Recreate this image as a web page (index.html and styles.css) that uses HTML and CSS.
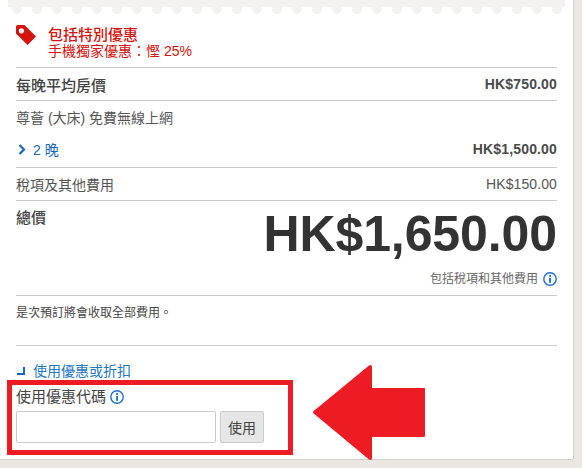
FILE: index.html
```html
<!DOCTYPE html>
<html lang="zh-Hant">
<head>
<meta charset="utf-8">
<title>價格摘要</title>
<link rel="stylesheet" href="styles.css">
</head>
<body>
<main class="card">
  <div class="scallop"></div>
  <section class="promo">
    <svg class="tag" viewBox="0 0 20 20" width="20" height="20" aria-hidden="true">
      <path d="M2 0H8.5L20 11.5L11.5 20L0 8.5V2Q0 0 2 0Z" fill="#d6120f"/>
      <circle cx="5.4" cy="5.8" r="2.6" fill="#fff"/>
    </svg>
    <div>
      <div class="promo-title">包括特別優惠</div>
      <div class="promo-sub">手機獨家優惠：慳 25%</div>
    </div>
  </section>
  <div class="row row-avg"><span class="strong">每晚平均房價</span><span class="money">HK$750.00</span></div>
  <div class="room-block">
    <div class="room">尊薈 (大床) 免費無線上網</div>
    <div class="nights">
      <span class="nights-label">
        <svg viewBox="0 0 8 11" width="8" height="11" aria-hidden="true"><path d="M1.5 1L6 5.5L1.5 10" fill="none" stroke="#1668c4" stroke-width="2.2"/></svg>
        2 晚
      </span>
      <span class="money">HK$1,500.00</span>
    </div>
  </div>
  <div class="row row-tax"><span>稅項及其他費用</span><span class="tax-val">HK$150.00</span></div>
  <section class="total">
    <div class="total-top"><span class="strong">總價</span><span class="grand">HK$1,650.00</span></div>
    <div class="total-note">包括稅項和其他費用
      <svg class="info" viewBox="0 0 14 14" width="14" height="14" aria-hidden="true"><circle cx="7" cy="7" r="6.2" fill="none" stroke="#1f6fd0" stroke-width="1.4"/><rect x="6.1" y="6" width="1.9" height="4.8" fill="#1f6fd0"/><rect x="6.1" y="3.1" width="1.9" height="1.8" fill="#1f6fd0"/></svg>
    </div>
  </section>
  <div class="notice">是次預訂將會收取全部費用。</div>
  <a class="coupon-link" href="#">
    <svg viewBox="0 0 8 8" width="8" height="8" aria-hidden="true"><path d="M7 0V7H0" fill="none" stroke="#1668c4" stroke-width="2"/></svg>
    使用優惠或折扣
  </a>
  <form class="coupon">
    <label class="coupon-label" for="code">使用優惠代碼
      <svg class="info" viewBox="0 0 14 14" width="14" height="14" aria-hidden="true"><circle cx="7" cy="7" r="6.2" fill="none" stroke="#1f6fd0" stroke-width="1.4"/><rect x="6.1" y="6" width="1.9" height="4.8" fill="#1f6fd0"/><rect x="6.1" y="3.1" width="1.9" height="1.8" fill="#1f6fd0"/></svg>
    </label>
    <div class="coupon-fields">
      <input id="code" class="coupon-input" type="text">
      <button class="coupon-btn" type="button">使用</button>
    </div>
  </form>
  <div class="highlight"></div>
  <svg class="arrow" viewBox="0 0 112 95" width="112" height="95" aria-hidden="true">
    <path d="M0.4 46.2L56 0.4Q59 -0.8 59 2V23H111Q112 23 112 24V71Q112 72 111 72H59V93Q59 95.8 56 94.6L0.4 48.2Q-0.4 47.2 0.4 46.2Z" fill="#ed1c24"/>
  </svg>
</main>
</body>
</html>
```
FILE: styles.css
```css
* { box-sizing: border-box; }
html, body { margin: 0; padding: 0; }
body {
  width: 582px;
  height: 468px;
  overflow: hidden;
  background: #ebe8e2;
  font-family: "Liberation Sans", "Noto Sans CJK TC", sans-serif;
  color: #444;
}
.card {
  position: relative;
  width: 574px;
  height: 460px;
  padding: 0 16px 0 16px;
  background: #fff;
  border-right: 1px solid #d2d0cb;
  border-bottom: 1px solid #d2d0cb;
  border-bottom-right-radius: 3px;
}
.card > * { width: 541px; }
.scallop {
  position: absolute;
  top: 0;
  left: 8px;
  width: 557px !important;
  height: 14px;
  background:
    linear-gradient(#f4f2ee, #f4f2ee) 0 0 / 100% 7px no-repeat,
    radial-gradient(circle at 9px 9px, #f4f2ee 4.6px, transparent 5.2px) 0 0 / 20px 14px repeat-x;
}
.promo {
  display: flex;
  height: 68px;
  padding-top: 25px;
  gap: 12px;
  border-bottom: 1px solid #ccc;
}
.tag { flex: none; }
.promo-title {
  margin-top: 2px;
  font-size: 15px;
  line-height: 16px;
  font-weight: 500;
  color: #d6120f;
}
.promo-sub {
  font-size: 14px;
  line-height: 16px;
  color: #d6120f;
}
.row {
  display: flex;
  justify-content: space-between;
  align-items: center;
  border-bottom: 1px solid #ccc;
}
.row-avg { height: 33px; }
.row-tax { height: 33px; font-size: 14px; color: #555; }
.strong { font-size: 15px; font-weight: 500; color: #444; }
.money { font-size: 14px; font-weight: 700; color: #4a4a4a; letter-spacing: .15px; }
.tax-val { font-size: 14px; color: #555; letter-spacing: .1px; }
.room-block {
  height: 67px;
  border-bottom: 1px solid #ccc;
  padding-top: 8px;
}
.room { font-size: 14px; line-height: 18px; color: #555; }
.nights {
  display: flex;
  justify-content: space-between;
  align-items: center;
  margin-top: 13px;
  height: 18px;
}
.nights-label {
  display: flex;
  align-items: center;
  gap: 7px;
  padding-left: 2px;
  font-size: 14px;
  color: #1668c4;
}
.total {
  height: 95px;
  border-bottom: 1px solid #ccc;
}
.total-top {
  display: flex;
  justify-content: space-between;
  align-items: flex-start;
  height: 62px;
}
.total-top .strong { margin-top: 8px; line-height: 18px; }
.grand {
  margin-top: 4px;
  font-size: 50px;
  line-height: 58px;
  font-weight: 700;
  letter-spacing: -.1px;
  color: #333;
}
.total-note {
  display: flex;
  justify-content: flex-end;
  align-items: center;
  gap: 5px;
  margin-top: 8px;
  font-size: 12px;
  line-height: 16px;
  color: #666;
}
.notice {
  height: 50px;
  padding-top: 9px;
  border-bottom: 1px solid #ccc;
  font-size: 12px;
  line-height: 16px;
  color: #444;
}
.coupon-link {
  display: flex;
  align-items: center;
  gap: 8px;
  margin-top: 16px;
  padding-left: 1px;
  font-size: 14px;
  line-height: 18px;
  color: #1e78c8;
  text-decoration: none;
}
.coupon { margin-top: 8px; }
.coupon-label {
  display: flex;
  align-items: center;
  gap: 4px;
  font-size: 15px;
  line-height: 18px;
  color: #444;
}
.coupon-fields {
  display: flex;
  gap: 4px;
  margin-top: 5px;
}
.coupon-input {
  width: 200px;
  height: 32px;
  border: 1px solid #ccc;
  border-radius: 2px;
  background: #fff;
}
.coupon-btn {
  width: 44px;
  height: 32px;
  padding: 0;
  border: 1px solid #ccc;
  border-radius: 2px;
  background: #e6e6e6;
  font: 14px "Liberation Sans", "Noto Sans CJK TC", sans-serif;
  color: #444;
}
.highlight {
  position: absolute;
  left: 7px;
  top: 380px;
  width: 286px !important;
  height: 75px;
  border: 5px solid #ed1c24;
}
.arrow {
  position: absolute;
  left: 313px;
  top: 365px;
  width: 112px !important;
}
```
